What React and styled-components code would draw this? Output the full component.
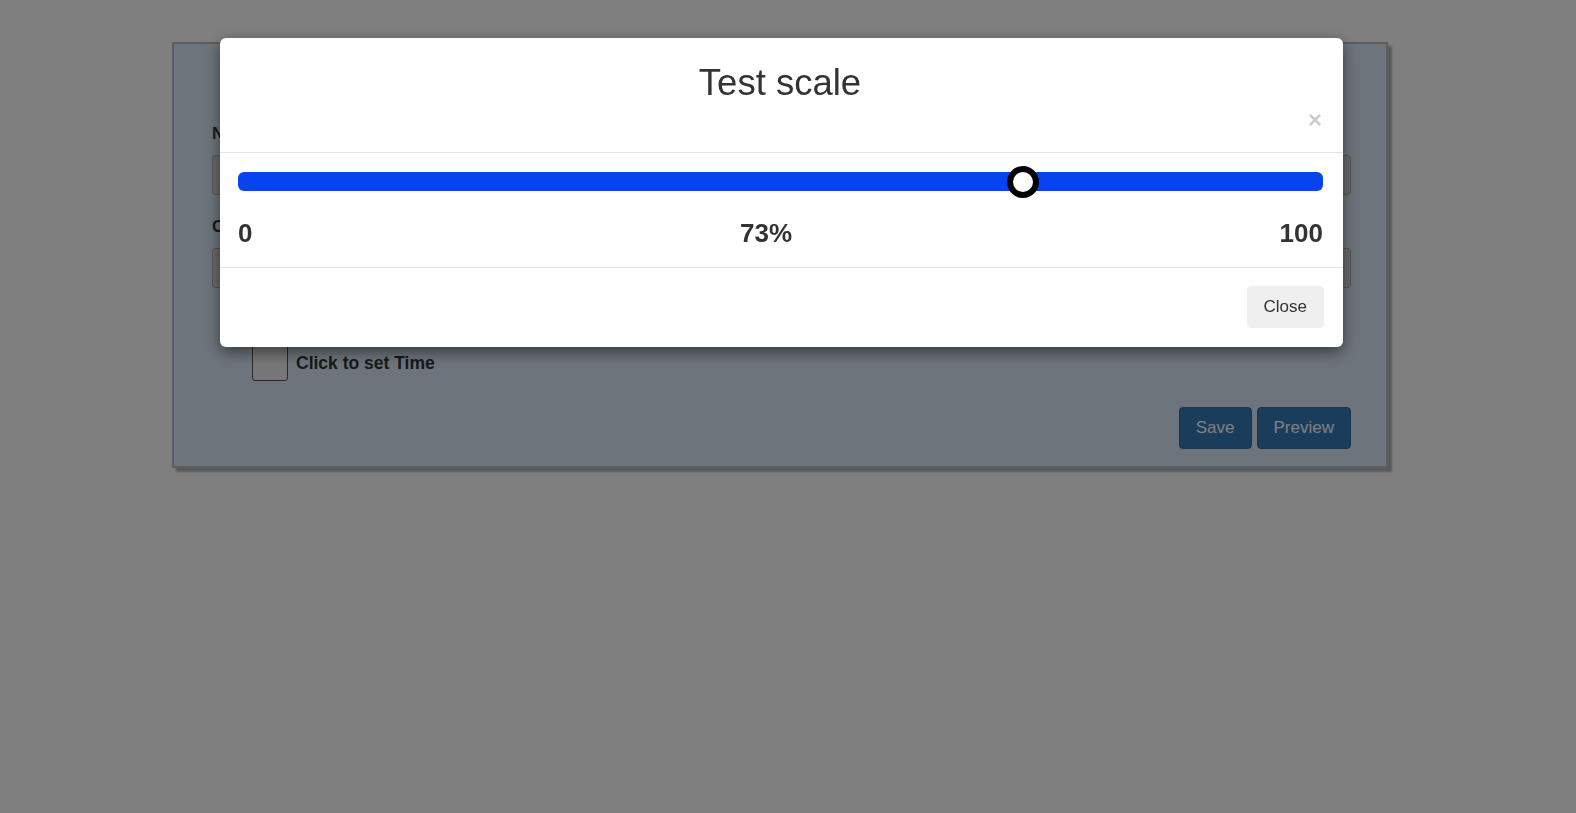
import React, { useState } from "react";
import styled, { createGlobalStyle } from "styled-components";

const GlobalStyle = createGlobalStyle`
  html, body {
    margin: 0;
    padding: 0;
    background: #fff;
    font-family: "Liberation Sans", Arial, Helvetica, sans-serif;
    color: #333;
  }
  * { box-sizing: border-box; }
`;

const Page = styled.div`
  min-height: 100vh;
  padding: 42px 0 0 172px;
`;

/* form card behind the modal */

const Panel = styled.div`
  width: 1216px;
  background: #dae9f7;
  border: 2px solid #bcbcbc;
  box-shadow: 4px 4px 2px rgba(0, 0, 0, 0.3);
  padding: 78px 35px 17px 38px;
`;

const FieldGroup = styled.div`
  margin-bottom: 20px;
`;

const FieldLabel = styled.label`
  display: block;
  font-size: 17px;
  line-height: 24px;
  font-weight: bold;
  color: #333;
  margin-bottom: 9px;
`;

const TextField = styled.input`
  display: block;
  width: 100%;
  height: 40px;
  border: 1px solid #aaa;
  border-radius: 4px;
  background: #d6d6d6;
  font: inherit;
  font-size: 17px;
  padding: 0 12px;
`;

const CheckRow = styled.label`
  display: flex;
  align-items: center;
  gap: 8px;
  margin: 57px 0 0 40px;
  font-size: 17.5px;
  line-height: 24px;
  font-weight: bold;
  color: #333;
`;

const CheckBox = styled.span`
  width: 36px;
  height: 36px;
  border: 1px solid #555;
  border-radius: 3px;
  background: #eee;
`;

const ButtonRow = styled.div`
  display: flex;
  justify-content: flex-end;
  gap: 5px;
  margin-top: 26px;
`;

const PrimaryButton = styled.button`
  height: 42px;
  padding: 0 16px;
  font-family: inherit;
  font-size: 17px;
  color: #fff;
  background: #337ab7;
  border: 1px solid #2e6da4;
  border-radius: 4px;
`;

/* modal */

const Backdrop = styled.div`
  position: fixed;
  inset: 0;
  background: rgba(0, 0, 0, 0.5);
`;

const Dialog = styled.div`
  width: 1123px;
  margin: 38px 0 0 220px;
  background: #fff;
  border-radius: 6px;
  box-shadow: 0 5px 15px rgba(0, 0, 0, 0.5);
`;

const DialogHeader = styled.div`
  padding: 25px 21px 22px 18px;
  border-bottom: 1px solid #e5e5e5;
`;

const DialogTitle = styled.h1`
  margin: 0;
  font-size: 36.5px;
  line-height: 40px;
  font-weight: normal;
  text-align: center;
  color: #333;
`;

const CloseRow = styled.div`
  display: flex;
  justify-content: flex-end;
  margin-top: 6px;
`;

const CloseX = styled.button`
  padding: 0;
  border: 0;
  background: transparent;
  font-family: inherit;
  font-size: 24px;
  line-height: 21px;
  height: 21px;
  font-weight: bold;
  color: #000;
  opacity: 0.2;
`;

const DialogBody = styled.div`
  padding: 19px 20px 19px 18px;
`;

const Range = styled.input.attrs({ type: "range" })`
  -webkit-appearance: none;
  appearance: none;
  display: block;
  width: 100%;
  height: 19px;
  margin: 0;
  padding: 0;
  background: transparent;
  outline: none;

  &::-webkit-slider-runnable-track {
    height: 19px;
    background: #0743ef;
    border-radius: 6px;
  }

  &::-webkit-slider-thumb {
    -webkit-appearance: none;
    box-sizing: border-box;
    width: 32px;
    height: 32px;
    margin-top: -6.5px;
    border-radius: 50%;
    background: #fff;
    border: 6px solid #000;
  }
`;

const ScaleLabels = styled.div`
  display: flex;
  justify-content: space-between;
  margin-top: 28px;
  font-size: 26px;
  line-height: 29px;
  font-weight: bold;
  color: #333;
`;

const DialogFooter = styled.div`
  display: flex;
  justify-content: flex-end;
  padding: 18px 19px 19px;
  border-top: 1px solid #e5e5e5;
`;

const GreyButton = styled.button`
  height: 42px;
  padding: 0 16px;
  font-family: inherit;
  font-size: 17px;
  color: #333;
  background: #efefef;
  border: 1px solid #efefef;
  border-radius: 4px;
`;

export default function App() {
  const [value, setValue] = useState(73);

  return (
    <>
      <GlobalStyle />
      <Page>
        <Panel>
          <FieldGroup>
            <FieldLabel>Name</FieldLabel>
            <TextField />
          </FieldGroup>
          <FieldGroup>
            <FieldLabel>Comment</FieldLabel>
            <TextField />
          </FieldGroup>
          <CheckRow>
            <CheckBox />
            Click to set Time
          </CheckRow>
          <ButtonRow>
            <PrimaryButton>Save</PrimaryButton>
            <PrimaryButton>Preview</PrimaryButton>
          </ButtonRow>
        </Panel>
      </Page>

      <Backdrop>
        <Dialog>
          <DialogHeader>
            <DialogTitle>Test scale</DialogTitle>
            <CloseRow>
              <CloseX aria-label="Close">×</CloseX>
            </CloseRow>
          </DialogHeader>
          <DialogBody>
            <Range
              min={0}
              max={100}
              value={value}
              onChange={(e) => setValue(Number(e.target.value))}
            />
            <ScaleLabels>
              <span>0</span>
              <span>{value}%</span>
              <span>100</span>
            </ScaleLabels>
          </DialogBody>
          <DialogFooter>
            <GreyButton>Close</GreyButton>
          </DialogFooter>
        </Dialog>
      </Backdrop>
    </>
  );
}
